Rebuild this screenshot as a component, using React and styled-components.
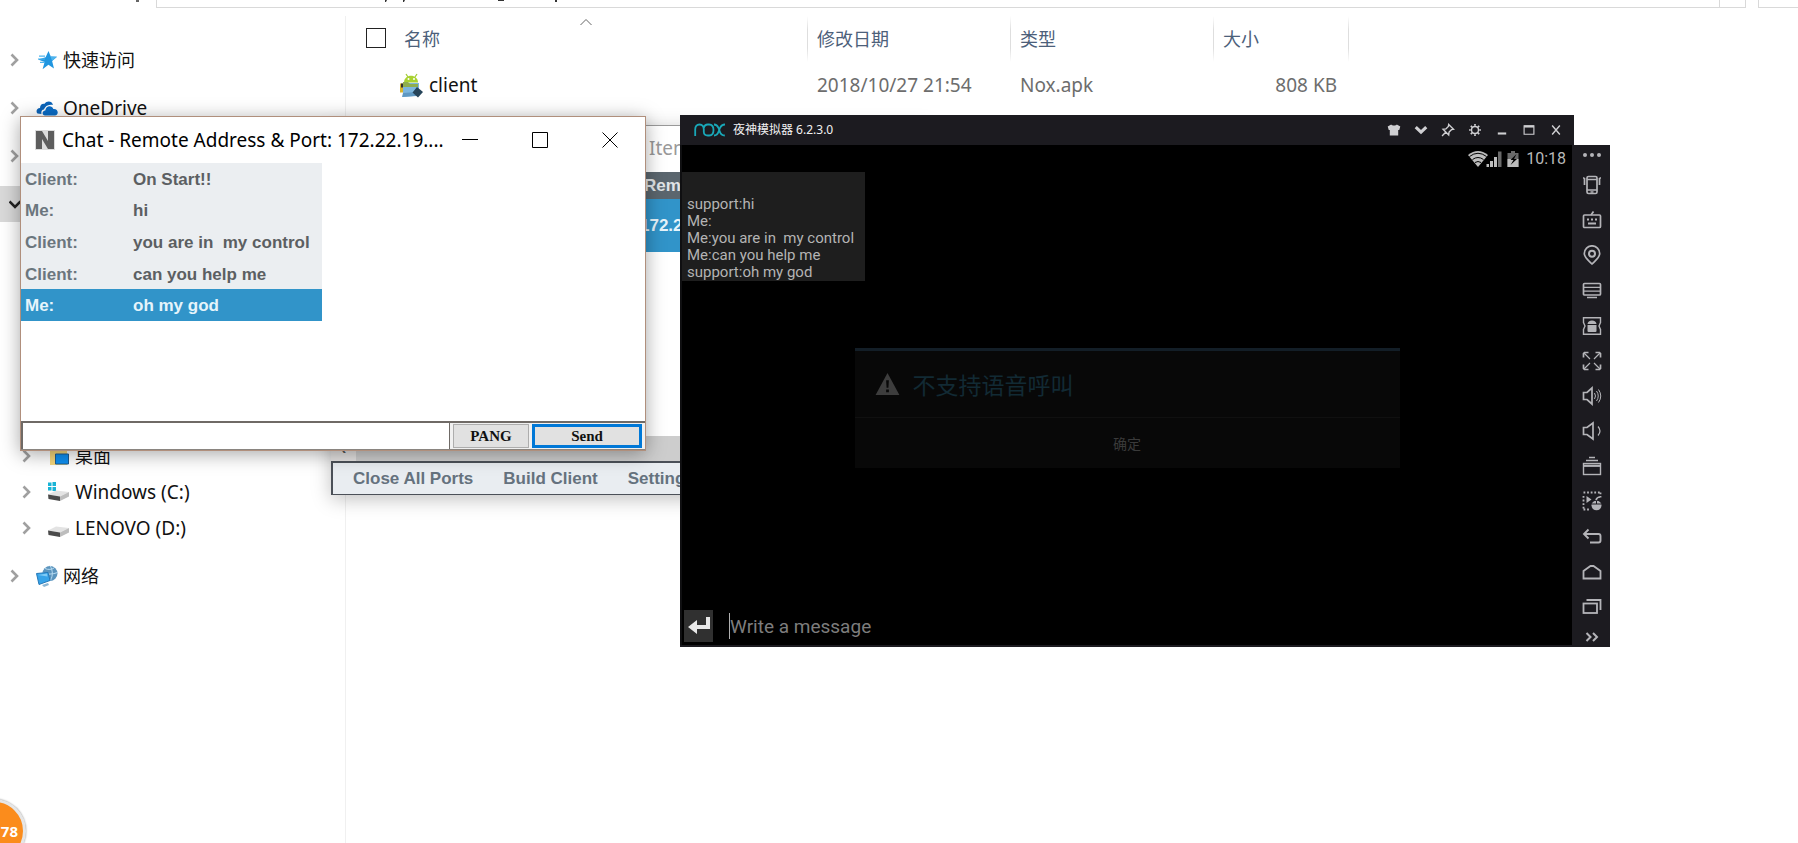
import React, { useState } from 'react'
import styled, { createGlobalStyle, css } from 'styled-components'

const uiFont = '"Noto Sans", "Noto Sans CJK SC", sans-serif';
const swingFont = '"Liberation Sans", Arial, sans-serif';
const androidFont = 'Roboto, "Noto Sans CJK SC", sans-serif';

const messages = [
    { id: 1, from: 'Client:', text: 'On Start!!' },
    { id: 2, from: 'Me:', text: 'hi' },
    { id: 3, from: 'Client:', text: 'you are in  my control' },
    { id: 4, from: 'Client:', text: 'can you help me' },
    { id: 5, from: 'Me:', text: 'oh my god' },
];

const phoneLog = [
    '',
    'support:hi',
    'Me:',
    'Me:you are in  my control',
    'Me:can you help me',
    'support:oh my god',
];

/* ---------- explorer icons ---------- */

const Chevron = ({ down }) => (
    <svg width="12" height="14" viewBox="0 0 12 14" fill="none" stroke={down ? '#222' : '#a0a0a0'} strokeWidth="2.6">
        {down ? <path d="M0.5 4.5 6 10l5.5-5.5" /> : <path d="M2.5 1.5 8 7l-5.5 5.5" />}
    </svg>
);

const StarIcon = () => (
    <svg width="22" height="20" viewBox="0 0 22 20">
        <path d="M12.5 1l2.2 5.6 6.3.2-4.9 4.2 1.9 7.6-5.6-3.8-5.8 4.4 2-7.2L2 9.5l7.6-2.2z" fill="#2196e0" />
        <path d="M12.5 1l2.2 5.6 6.3.2-4.9 4.2z" fill="#4db4ee" />
        <path d="M3 6.2h6M2 9h7M4 12.3h5" stroke="#4fb5ee" strokeWidth="1.2" />
    </svg>
);

const CloudIcon = () => (
    <svg width="22" height="15" viewBox="0 0 22 15">
        <path d="M1.5 12.5C-.6 10.300 1 7 4 7c0-3 2-4.600 4.600-4.200C10.600-.4 16-.4 17 4 9.500 3 8.500 8 8 8.500 5.500 8.700 5 11 5.500 13z" fill="#0a63b8" />
        <path d="M9 14.500c-3.200 0-3.300-4.600.3-4.900C9.700 4.600 16 4 17.300 8c5.200-.6 6 6 1.500 6.500z" fill="#0a6cc6" />
    </svg>
);

const DesktopIcon = () => (
    <svg width="24" height="22" viewBox="0 0 24 22">
        <path d="M4 3h8l2 2h7v15H4z" fill="#f5d67c" />
        <path d="M9.500 9h13v10h-13z" fill="#0f8ff0" stroke="#1d5c93" />
    </svg>
);

const DriveIcon = ({ system }) => (
    <svg width="24" height="24" viewBox="0 0 24 24">
        {system && <path d="M2 2.500h3.500V6H2zM6.500 2H10v4H6.500zM2 7h3.500v3.500H2zM6.500 7H10v4H6.500z" fill="#19b4d6" />}
        <path d="M2 14.500 10 10.500l13 1.500-9 4.500z" fill="#e3e3e3" />
        <path d="M2 14.500l12 2v4.500L2.500 19z" fill="#4a4a4a" />
        <path d="M14 16.500l9-4.500v4.500L14 21z" fill="#bdbdbd" />
    </svg>
);

const NetworkIcon = () => (
    <svg width="22" height="22" viewBox="0 0 22 22">
        <circle cx="14" cy="8.500" r="7.500" fill="#5b94bd" />
        <path d="M9 3.500c3 1.500 7 1 9-.5M14 .6c3 5 3 10 .5 14.800M7 8c4 1.600 10 1.400 14.500-.5" stroke="#b9dcf2" fill="none" />
        <path d="M0.500 8.500 12 7.500l2 8-11 4z" fill="#37a3e8" stroke="#2679b8" />
        <path d="M2 10l9-1.500.5 3z" fill="#7fcbf7" />
        <path d="M6 20l6-2 1 2-5 2z" fill="#8cb6d3" />
    </svg>
);

const ApkIcon = () => (
    <svg width="24" height="26" viewBox="0 0 24 26">
        <path d="M6 2l2 3M17 2l-2 3" stroke="#a4cc39" strokeWidth="1.300" />
        <path d="M4 10.500c0-9 14-9 14 0z" fill="#a9d22f" />
        <circle cx="8.500" cy="7" r="1" fill="#fff" />
        <circle cx="14" cy="7" r="1" fill="#fff" />
        <path d="M0 11.500h3v9H0z" fill="#d9b42a" />
        <path d="M1 11.500h2v4H1z" fill="#333" />
        <path d="M3 11h16v12.500L3 25z" fill="#7db6dd" />
        <path d="M3 10h5l2 2h8v3H3z" fill="#8fae4e" />
        <path d="M3 21l14-1v4L2 25z" fill="#5f98c2" />
        <path d="M17 15l6 5-5 5.500-5.500-5z" fill="#26445a" />
    </svg>
);

/* ---------- emulator icons ---------- */

const Glyph = ({ children, size = 20 }) => (
    <svg width={size} height={size} viewBox="0 0 20 20" fill="none" stroke="currentColor" strokeWidth="1.700">
        {children}
    </svg>
);

const sideTools = [
    { id: 'shake', icon: <Glyph><rect x="5" y="1.500" width="10" height="17" rx="1.500" /><path d="M5 4.500h10M5 15h10M8.500 17h3" /><path d="M2.500 3v7M1 3h1.500M17.500 3v7M17.500 3H19" /></Glyph> },
    { id: 'keyboard', icon: <Glyph><rect x="1.500" y="5" width="17" height="12.500" rx="1" /><path d="M9 5l2.500-3.500" /><path d="M5 9.500h2M9 9.500h2M13 9.500h2M6 13.500h8" strokeWidth="2" /></Glyph> },
    { id: 'location', icon: <Glyph><path d="M10 19C6 15 2.300 12.500 2.300 8.500a7.700 7.700 0 0 1 15.400 0C17.700 12.500 14 15 10 19z" /><circle cx="10" cy="8.700" r="3" strokeWidth="2" /></Glyph> },
    { id: 'display', icon: <Glyph><rect x="1.500" y="3.500" width="17" height="11.500" rx="1" /><path d="M2 7.300h16M2 11.200h16M5 17.500h10" strokeWidth="1.300" /></Glyph> },
    { id: 'mouse', icon: <Glyph><path d="M1.500 7V1.800h17V7M1.500 13v5.200h17V13M1.500 6.500l1.500 3.500-1.500 3.500M18.500 6.500 17 10l1.500 3.500" strokeWidth="1.400" /><path d="M5.500 9h9v6q0 1-1 1h-7q-1 0-1-1zM5.500 8q.5-3.500 4.500-3.500T14.500 8z" fill="currentColor" stroke="none" /></Glyph> },
    { id: 'fullscreen', icon: <Glyph><path d="M1.500 6.500v-4l1-1h4M13.500 1.500h4l1 1v4M18.500 13.500v4l-1 1h-4M6.500 18.500h-4l-1-1v-4" /><path d="M2 2l6 6M18 2l-6 6M2 18l6-6M18 18l-6-6" strokeWidth="1.200" /></Glyph> },
    { id: 'volume-up', icon: <Glyph><path d="M1.500 6.500H5l5-4.500v16l-5-4.500H1.500z" /><path d="M12.500 7q2 3 0 6M14.500 5q3.500 5 0 10M16.500 3.500q4.500 6.500 0 13" strokeWidth="1" /></Glyph> },
    { id: 'volume-down', icon: <Glyph><path d="M1.500 6.500H5l6-4.500v16l-6-4.500H1.500z" /><path d="M16 5.500q4 4.500 0 9" strokeWidth="1.200" /></Glyph> },
    { id: 'apps', icon: <Glyph><rect x="1.500" y="7.500" width="17" height="11" strokeWidth="1.400" /><path d="M2 9.800h16" strokeWidth="2.200" /><path d="M4 4.500h12M7 1.500h6" /></Glyph> },
    { id: 'macro', icon: <Glyph><path d="M1.500 1.500h17M1.500 5v13.500M1.500 18.500h7M18.500 1.500v5" strokeDasharray="1.800 1.800" strokeWidth="1.800" /><path d="M4.500 5l5 3.500-5 3.500z" fill="currentColor" stroke="none" /><ellipse cx="14.500" cy="14.500" rx="5" ry="4.800" fill="currentColor" stroke="none" /><path d="M9.500 13h10M14.500 9.500V13" stroke="#1c1b20" strokeWidth="1" /><path d="M14 9q1-3 4-3" /></Glyph> },
    { id: 'back', icon: <Glyph><path d="M6.500 2.500 2 7l4.500 4.500M2 7h14.500q2 0 2 2v4.500q0 2-2 2H8" strokeWidth="1.900" /></Glyph> },
    { id: 'home', icon: <Glyph><path d="M1.500 16.500V9l7-5h3l7 5v7.500z" strokeWidth="1.800" /></Glyph> },
    { id: 'recent', icon: <Glyph><rect x="1.500" y="6.500" width="13.500" height="9.500" strokeWidth="1.800" /><path d="M4.500 3h14v10" strokeWidth="1.800" /></Glyph> },
];

const titleTools = [
    { id: 'skin', icon: <Glyph size={14}><path d="M6 2c1 2.200 7 2.200 8 0l5 3-1.500 5H16v8H4v-8H2.500L1 5z" fill="currentColor" stroke="none" /></Glyph> },
    { id: 'more', icon: <Glyph size={14}><path d="M2.500 6l7.500 7 7.500-7" strokeWidth="4.500" /></Glyph> },
    { id: 'pin', icon: <Glyph size={14}><path d="M11 2l7 7-3 .5-3.500 3.500-.5 4-8-8 4-.5 3.500-3.500zM7 13l-5.500 5.500" strokeWidth="2" /></Glyph> },
    { id: 'settings', icon: <Glyph size={14}><circle cx="10" cy="10" r="5" strokeWidth="2" /><path d="M10 1.500V4M10 16v2.500M1.500 10H4M16 10h2.500M4 4l2.200 2.200M13.800 13.800 16 16M16 4l-2.200 2.200M6.200 13.800 4 16" strokeWidth="2.400" /></Glyph> },
    { id: 'minimize', icon: <Glyph size={14}><path d="M4 15h12" strokeWidth="3" /></Glyph> },
    { id: 'maximize', icon: <Glyph size={14}><path d="M3 4h14v12H3z" strokeWidth="1.600" /><path d="M3 5h14" strokeWidth="3" /></Glyph> },
    { id: 'close', icon: <Glyph size={14}><path d="M4.500 3.500l11 13M15.500 3.500l-11 13" strokeWidth="2" /></Glyph> },
];

const NoxLogo = () => (
    <svg width="32" height="14" viewBox="0 0 32 14" fill="none" stroke="#19a8b8" strokeWidth="1.800">
        <path d="M1.200 13V6.500Q1.200 1.500 5.500 1.500T9.800 6.500V9q.2 3.500 4 3.500h1.400q4.300 0 4.300-5.500T15.200 1.500h-1.400Q10.500 1.500 9.800 5" />
        <path d="M20 1.500q3 0 4.500 3.500l1.300 3.500q1.200 4 5 4M31 1.500q-3.500 0-5 3.500l-1.400 3.500q-1.300 4-4.600 4" />
    </svg>
);

const StatusIcons = () => (
    <svg width="52" height="18" viewBox="0 0 52 18">
        <path d="M0 5Q10-3 20 5L10 17z" fill="#bdbdbd" />
        <path d="M1.500 6.500Q10 0 18.500 6.500M4.500 9.500Q10 5.500 15.500 9.500M7 12.500q3-2 6 0" stroke="#000" fill="none" />
        <path d="M18.500 17v-3h2.500v3zM22 17v-6h3v6zM26 17V7h3v10z" fill="#bdbdbd" />
        <path d="M30 17V1.500h3.500V17z" fill="#6a6a6a" />
        <path d="M39.500 3H43V1h4v2h3.500v14h-11z" fill="#6a6a6a" />
        <path d="M39.500 9h11v8h-11z" fill="#bdbdbd" />
        <path d="M48.500 4l-6 6h3l-3 5 6.500-6h-3z" fill="#000" />
    </svg>
);

function NavEntry({ label, icon, nested, open, cjk }) {
    return (
        <NavItem $nested={nested} $open={open}>
            <Chevron down={open} />
            {icon}
            {label && <NavLink href="#" $cjk={cjk}>{label}</NavLink>}
        </NavItem>
    );
}

function Explorer() {
    return (
        <ExplorerStyled>
            <AddressRow>
                <UpButton type="button" aria-label="Up">
                    <svg width="4" height="2" viewBox="0 0 4 2"><path d="M0 0h3v2H0z" fill="#666" /></svg>
                </UpButton>
                <AddressBox>
                    {/* only the descenders of the path stay below the top edge */}
                    <svg width="420" height="2" viewBox="0 0 420 2" fill="#333">
                        <path d="M228 0h2l-1 2h-1zM246 0h2l-1 2h-1zM341 0h6v1h-6zM398 0h2v2h-2z" />
                    </svg>
                </AddressBox>
                <AddressDrop />
                <SearchBox />
            </AddressRow>
            <Panes>
                <NavPane>
                    <NavList>
                        <NavEntry label="快速访问" icon={<StarIcon />} cjk />
                        <NavEntry label="OneDrive" icon={<CloudIcon />} />
                        <NavEntry />
                        <NavEntry open />
                    </NavList>
                    <Drives>
                        <NavEntry label="桌面" icon={<DesktopIcon />} nested cjk />
                        <NavEntry label="Windows (C:)" icon={<DriveIcon system />} nested />
                        <NavEntry label="LENOVO (D:)" icon={<DriveIcon />} nested />
                    </Drives>
                    <NavList $last>
                        <NavEntry label="网络" icon={<NetworkIcon />} cjk />
                    </NavList>
                </NavPane>
                <FileArea>
                    <FileTable>
                        <thead>
                            <tr>
                                <FileHead $width={462}>
                                    <HeadName>
                                        <SelectAll type="checkbox" id="select-all" />
                                        <label htmlFor="select-all">名称</label>
                                    </HeadName>
                                    <SortMark width="14" height="8" viewBox="0 0 14 8">
                                        <path d="M1.500 7 7 1.500 12.500 7" fill="none" stroke="#666" />
                                    </SortMark>
                                </FileHead>
                                <FileHead $width={203}>修改日期</FileHead>
                                <FileHead $width={203}>类型</FileHead>
                                <FileHead $width={135}>大小</FileHead>
                            </tr>
                        </thead>
                        <tbody>
                            <tr>
                                <FileCell $name><FileName><ApkIcon />client</FileName></FileCell>
                                <FileCell>2018/10/27 21:54</FileCell>
                                <FileCell>Nox.apk</FileCell>
                                <FileCell $right>808 KB</FileCell>
                            </tr>
                        </tbody>
                    </FileTable>
                </FileArea>
            </Panes>
        </ExplorerStyled>
    );
}

function ServerWindow() {
    return (
        <ServerStyled>
            <ServerTitle>Item</ServerTitle>
            <ServerHead>Rem</ServerHead>
            <ServerRow>172.2</ServerRow>
            <ServerBody />
            <ScrollTrack><ScrollButton type="button" aria-label="Scroll left">‹</ScrollButton></ScrollTrack>
            <ServerMenu>
                <MenuButton type="button">Close All Ports</MenuButton>
                <MenuButton type="button">Build Client</MenuButton>
                <MenuButton type="button">Setting</MenuButton>
            </ServerMenu>
        </ServerStyled>
    );
}

function ChatWindow() {
    const [selected, setSelected] = useState(5);
    const [draft, setDraft] = useState('');

    return (
        <ChatStyled>
            <ChatTitle>
                <svg width="20" height="20" viewBox="0 0 20 20">
                    <path d="M0 0h20v20H0z" fill="#dcdcdc" />
                    <path d="M1 1h6l6 10V1h6v18h-6L7 9v10H1z" fill="#5d5d5d" />
                </svg>
                <h1>Chat - Remote Address &amp; Port: 172.22.19....</h1>
                <CaptionButton type="button" aria-label="Minimize">
                    <svg width="16" height="16" viewBox="0 0 16 16"><path d="M0 7.500h16" stroke="#000" /></svg>
                </CaptionButton>
                <CaptionButton type="button" aria-label="Maximize">
                    <svg width="16" height="16" viewBox="0 0 16 16"><path d="M.5.500h15v15H.5z" fill="none" stroke="#000" /></svg>
                </CaptionButton>
                <CaptionButton type="button" aria-label="Close">
                    <svg width="16" height="16" viewBox="0 0 16 16"><path d="M.5.500l15 15M15.500.500l-15 15" stroke="#000" /></svg>
                </CaptionButton>
            </ChatTitle>
            <ChatBody>
                <MessageTable>
                    <tbody>
                        {messages.map(m => (
                            <MessageRow key={m.id} $selected={m.id === selected} onClick={() => setSelected(m.id)}>
                                <td>{m.from}</td>
                                <td>{m.text}</td>
                            </MessageRow>
                        ))}
                    </tbody>
                </MessageTable>
            </ChatBody>
            <ChatFooter>
                <ChatInput aria-label="Message" value={draft} onChange={e => setDraft(e.target.value)} />
                <ChatButton type="button" $width={76}>PANG</ChatButton>
                <ChatButton type="button" $width={110} $primary>Send</ChatButton>
            </ChatFooter>
        </ChatStyled>
    );
}

function Emulator() {
    return (
        <EmulatorStyled>
            <EmuTitle>
                <NoxLogo />
                <span>夜神模拟器 6.2.3.0</span>
                <EmuTools>
                    {titleTools.map(t => (
                        <EmuTool key={t.id} type="button" aria-label={t.id}>{t.icon}</EmuTool>
                    ))}
                </EmuTools>
            </EmuTitle>
            <EmuMain>
                <Screen>
                    <StatusBar><StatusIcons />10:18</StatusBar>
                    <PhoneLog>
                        {phoneLog.map((line, i) => <p key={i}>{line}</p>)}
                    </PhoneLog>
                    <Alert>
                        <AlertTitle>
                            <svg width="25" height="22" viewBox="0 0 26 24">
                                <path d="M13 0l13 24H0z" fill="#3d3d3d" />
                                <path d="M11.500 8h3l-.5 8h-2zM11.500 18h3v3h-3z" fill="#080808" />
                            </svg>
                            不支持语音呼叫
                        </AlertTitle>
                        <AlertButton type="button">确定</AlertButton>
                    </Alert>
                    <Composer>
                        <EnterButton type="button" aria-label="Send message">
                            <svg width="24" height="22" viewBox="0 0 24 22">
                                <path d="M19 2h4v12H10v5L1 12l9-7v5h9z" fill="#e8e8e8" />
                            </svg>
                        </EnterButton>
                        <Caret />
                        <ComposerInput aria-label="Write a message" placeholder="Write a message" />
                    </Composer>
                </Screen>
                <SideBar>
                    <SideTool type="button" aria-label="Menu" $height={20}>
                        <svg width="20" height="6" viewBox="0 0 20 6" fill="currentColor">
                            <circle cx="3" cy="3" r="2" /><circle cx="10" cy="3" r="2" /><circle cx="17" cy="3" r="2" />
                        </svg>
                    </SideTool>
                    <SideList>
                        {sideTools.map(t => (
                            <SideTool key={t.id} type="button" aria-label={t.id} $height={34}>{t.icon}</SideTool>
                        ))}
                    </SideList>
                    <SideTool type="button" aria-label="Expand" $height={16}>
                        <svg width="14" height="10" viewBox="0 0 14 10" fill="none" stroke="currentColor" strokeWidth="2">
                            <path d="M1.500 1l4 4-4 4M8 1l4 4-4 4" />
                        </svg>
                    </SideTool>
                </SideBar>
            </EmuMain>
        </EmulatorStyled>
    );
}

function App() {
    return (
        <>
            <GlobalStyle />
            <Desktop>
                <Explorer />
                <ServerWindow />
                <ChatWindow />
                <Emulator />
                <Bubble type="button">78</Bubble>
            </Desktop>
        </>
    );
}

const GlobalStyle = createGlobalStyle`
    *{
        box-sizing: border-box;
        margin: 0;
        padding: 0;
    }
    body{
        background: #fff;
        font-family: ${uiFont};
        overflow: hidden;
    }
    button, input{
        font: inherit;
        color: inherit;
        border: none;
        background: none;
        outline: none;
        border-radius: 0;
    }
    svg{
        display: block;
        flex: none;
    }
    a{
        color: inherit;
        text-decoration: none;
    }
`;

const Desktop = styled.main`
    position: relative;
    min-height: 100vh;
    display: flex;
    overflow: hidden;
`;

const ExplorerStyled = styled.section`
    flex: 1;
    display: flex;
    flex-direction: column;
`;

const AddressRow = styled.div`
    display: flex;
    height: 8px;
`;

const UpButton = styled.button`
    display: flex;
    align-items: flex-start;
    width: 156px;
    padding-left: 136px;
`;

const AddressBox = styled.div`
    flex: 1;
    border: 1px solid #d9d9d9;
    border-top: none;
    border-right: none;
`;

const AddressDrop = styled.div`
    width: 27px;
    border: 1px solid #d9d9d9;
    border-top: none;
`;

const SearchBox = styled.div`
    width: 40px;
    margin-left: 12px;
    border: 1px solid #d9d9d9;
    border-top: none;
    border-right: none;
`;

const Panes = styled.div`
    flex: 1;
    display: flex;
    padding-top: 8px;
`;

const NavPane = styled.nav`
    width: 346px;
    padding-top: 26px;
    border-right: 1px solid #f0f0f0;
`;

const NavList = styled.ul`
    display: flex;
    flex-direction: column;
    gap: 12px;
    list-style: none;
    margin-top: ${p => (p.$last ? '12px' : '0')};
`;

/* the folders above these sit behind the chat window */
const Drives = styled.ul`
    list-style: none;
    margin-top: 216px;
`;

const NavItem = styled.li`
    display: flex;
    align-items: center;
    gap: 5px;
    height: 36px;
    padding-left: ${p => (p.$nested ? '21px' : '9px')};
    background: ${p => (p.$open ? '#d9d9d9' : 'none')};
    svg + svg{
        margin-left: ${p => (p.$nested ? '8px' : '10px')};
    }
`;

const NavLink = styled.a`
    font-size: ${p => (p.$cjk ? '18px' : '19px')};
    line-height: 24px;
    color: #111;
`;

const FileArea = styled.div`
    flex: 1;
`;

const FileTable = styled.table`
    border-collapse: collapse;
    table-layout: fixed;
    width: 1003px;
`;

const FileHead = styled.th`
    position: relative;
    width: ${p => p.$width}px;
    height: 46px;
    padding: 0 0 2px 9px;
    background: linear-gradient(#fff, #dedede 30%, #dedede 70%, #fff) right / 1px 100% no-repeat;
    color: #4c607a;
    font-size: 18px;
    font-weight: 400;
    text-align: left;
`;

const HeadName = styled.div`
    display: flex;
    align-items: center;
    gap: 18px;
    padding-left: 11px;
`;

const SelectAll = styled.input`
    appearance: none;
    width: 20px;
    height: 20px;
    border: 1px solid #222;
`;

const SortMark = styled.svg`
    position: absolute;
    top: 2px;
    left: 233px;
`;

const FileCell = styled.td`
    height: 46px;
    padding-left: ${p => (p.$name ? '54px' : '9px')};
    padding-right: ${p => (p.$right ? '12px' : '0')};
    color: ${p => (p.$name ? '#111' : '#6d6d6d')};
    font-size: 19px;
    text-align: ${p => (p.$right ? 'right' : 'left')};
`;

const FileName = styled.div`
    display: flex;
    align-items: center;
    gap: 5px;
`;

const windowFrame = css`
    position: absolute;
    display: flex;
    flex-direction: column;
`;

const ServerStyled = styled.section`
    ${windowFrame}
    left: 331px;
    top: 125px;
    width: 600px;
    background: #fff;
    border-top: 1px solid #999;
    box-shadow: 0 4px 18px rgba(0, 0, 0, 0.25);
    font-family: ${swingFont};
    font-size: 17px;
    font-weight: 700;
`;

const ServerTitle = styled.header`
    height: 46px;
    padding-left: 318px;
    color: #999;
    font: 400 19px/44px ${uiFont};
`;

const ServerHead = styled.div`
    height: 27px;
    padding-left: 313px;
    background: #5b666e;
    color: #e0e4e7;
    line-height: 28px;
`;

const ServerRow = styled.div`
    height: 53px;
    padding-left: 309px;
    background: #3194c9;
    color: #e6f4fb;
    line-height: 54px;
`;

const ServerBody = styled.div`
    height: 184px;
`;

const ScrollTrack = styled.div`
    height: 25px;
    background: #cdcdcd;
`;

const ScrollButton = styled.button`
    width: 25px;
    height: 25px;
    background: #e4e2e1;
    color: #555;
    line-height: 20px;
`;

const ServerMenu = styled.div`
    display: flex;
    align-items: center;
    gap: 30px;
    height: 34px;
    padding-left: 20px;
    background: #e9edf1;
    border: 2px solid #4b5058;
    border-bottom-width: 1px;
`;

const MenuButton = styled.button`
    color: #65727e;
    line-height: 24px;
    white-space: nowrap;
`;

const ChatStyled = styled.section`
    ${windowFrame}
    left: 20px;
    top: 116px;
    width: 626px;
    background: #fff;
    border: 1px solid #b08f7c;
    box-shadow: 0 3px 18px rgba(0, 0, 0, 0.35);
`;

const ChatTitle = styled.header`
    display: flex;
    align-items: center;
    height: 46px;
    padding-left: 14px;
    h1{
        flex: 1;
        min-width: 0;
        margin-left: 7px;
        font-size: 19px;
        font-weight: 400;
        line-height: 24px;
        white-space: nowrap;
    }
`;

const CaptionButton = styled.button`
    display: grid;
    place-items: center;
    flex: none;
    width: 70px;
    height: 46px;
`;

const ChatBody = styled.div`
    height: 258px;
`;

const MessageTable = styled.table`
    width: 301px;
    height: 158px;
    border-collapse: collapse;
    background: #ebeef1;
    font: 700 17px/20px ${swingFont};
    white-space: pre;
`;

const MessageRow = styled.tr`
    background: ${p => (p.$selected ? '#3194c9' : 'none')};
    color: ${p => (p.$selected ? '#e6f4fb' : '#5c5f62')};
    td{
        padding: 2px 0 0 5px;
    }
    td:first-child{
        width: 107px;
        padding-left: 4px;
        color: ${p => (p.$selected ? '#e6f4fb' : '#6b767e')};
    }
`;

const ChatFooter = styled.footer`
    display: flex;
    align-items: center;
    gap: 3px;
    height: 29px;
    padding-right: 3px;
    background: #f0f0f0;
    border-top: 2px solid #6f6a66;
    border-bottom: 1px solid #8a8580;
`;

const ChatInput = styled.input`
    flex: 1;
    min-width: 0;
    height: 26px;
    padding: 0 4px;
    background: #fff;
    border-left: 2px solid #6f6a66;
    border-right: 1px solid #6f6a66;
    font-size: 14px;
`;

const ChatButton = styled.button`
    width: ${p => p.$width}px;
    height: 24px;
    background: #e1e1e1;
    border: ${p => (p.$primary ? '3px solid #0078d7' : '1px solid #adadad')};
    color: #111;
    font: 700 15px/16px "Liberation Serif", serif;
`;

const EmulatorStyled = styled.section`
    ${windowFrame}
    left: 680px;
    top: 115px;
    width: 930px;
`;

const EmuTitle = styled.header`
    display: flex;
    align-items: center;
    gap: 7px;
    height: 30px;
    margin-right: 36px;
    padding: 0 5px 0 14px;
    background: #1c1b20;
    color: #f2f2f2;
    font: 400 12px/18px ${uiFont};
`;

const EmuTools = styled.div`
    display: flex;
    margin-left: auto;
`;

const EmuTool = styled.button`
    display: grid;
    place-items: center;
    width: 27px;
    height: 26px;
    color: #cfcfd2;
`;

const EmuMain = styled.div`
    display: flex;
    height: 502px;
    border-bottom: 2px solid #1c1b20;
`;

const Screen = styled.div`
    flex: 1;
    display: flex;
    flex-direction: column;
    align-items: flex-start;
    background: #000;
    border-left: 2px solid #0f0f11;
    font-family: ${androidFont};
`;

const StatusBar = styled.div`
    align-self: flex-end;
    display: flex;
    align-items: center;
    gap: 6px;
    height: 27px;
    padding-right: 6px;
    color: #b8b8b8;
    font-size: 16px;
`;

const PhoneLog = styled.div`
    width: 183px;
    padding: 7px 5px 0;
    background: #1e1e1e;
    color: #b4b4b4;
    font-size: 15px;
    p{
        height: 17px;
        line-height: 17px;
        white-space: pre;
    }
`;

const Alert = styled.div`
    display: flex;
    flex-direction: column;
    align-self: center;
    width: 545px;
    margin-top: 67px;
    background: #080808;
    border-top: 3px solid #131e27;
`;

const AlertTitle = styled.h2`
    display: flex;
    align-items: center;
    gap: 13px;
    height: 67px;
    padding-left: 20px;
    border-bottom: 1px solid #101010;
    color: #122a34;
    font-size: 23px;
    font-weight: 400;
`;

const AlertButton = styled.button`
    height: 50px;
    color: #3a3a3a;
    font-size: 14px;
`;

const Composer = styled.div`
    display: flex;
    align-items: center;
    align-self: stretch;
    margin-top: auto;
    padding: 0 6px 3px 2px;
`;

const EnterButton = styled.button`
    display: grid;
    place-items: center;
    width: 29px;
    height: 32px;
    background: #303030;
`;

const Caret = styled.span`
    width: 1px;
    height: 26px;
    margin-left: 16px;
    background: #b0b0b0;
`;

const ComposerInput = styled.input`
    flex: 1;
    height: 32px;
    font-size: 19px;
    color: #ccc;
    &::placeholder{
        color: #7d7d7d;
        opacity: 1;
    }
`;

const SideBar = styled.aside`
    display: flex;
    flex-direction: column;
    align-items: flex-end;
    width: 38px;
    background: #1c1b20;
    color: #b4b4b8;
`;

const SideList = styled.div`
    flex: 1;
    display: flex;
    flex-direction: column;
    justify-content: space-between;
    padding: 3px 0 5px;
`;

const SideTool = styled.button`
    display: grid;
    place-items: center;
    width: 36px;
    height: ${p => p.$height}px;
`;

const Bubble = styled.button`
    position: absolute;
    left: -38px;
    bottom: -20px;
    width: 64px;
    height: 64px;
    padding-right: 5px;
    border: 3px solid #e6e6e6;
    border-radius: 50%;
    background: #fb8c1c;
    box-shadow: 0 0 2px #888;
    color: #fff;
    font: 700 15px/20px ${uiFont};
    text-align: right;
`;

export default App;
